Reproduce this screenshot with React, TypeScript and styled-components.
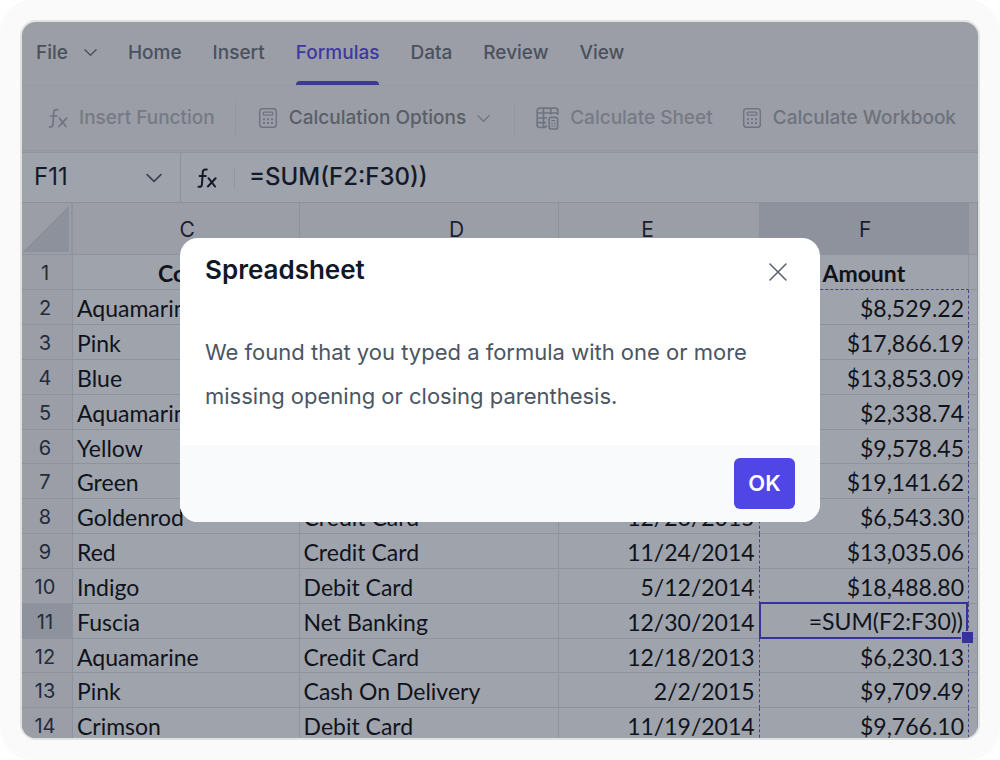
import React from "react";
import styled, { createGlobalStyle } from "styled-components";

const ui = '"Inter", "Liberation Sans", sans-serif';
const cellFont = '"Lato", "Open Sans", sans-serif';

const Global = createGlobalStyle`
  *, *::before, *::after { box-sizing: border-box; }
  body { margin: 0; background: #fff; font-family: ${ui}; }
  button, input { font: inherit; color: inherit; }
`;

const Frame = styled.main`
  height: 100vh;
  padding: 20px;
  background: #fafafa;
  border-radius: 32px;
`;

const Window = styled.div`
  position: relative;
  height: 100%;
  display: flex;
  flex-direction: column;
  overflow: hidden;
  border: 2px solid #e0e2e1;
  border-radius: 16px;
  background: #9b9ea6;
`;

const Tabs = styled.nav`
  flex: none;
  height: 64px;
  display: flex;
  align-items: stretch;
  gap: 31px;
  padding: 0 14px;
  border-bottom: 1px solid #969aa3;
`;

const Tab = styled.button<{ $active?: boolean }>`
  position: relative;
  display: flex;
  align-items: center;
  gap: 16px;
  padding: 0 0 2px;
  border: 0;
  background: none;
  color: ${p => (p.$active ? "#3e38a0" : "#4a515e")};
  font-size: 19px;
  font-weight: 500;
  line-height: 24px;

  &::after {
    content: "";
    display: ${p => (p.$active ? "block" : "none")};
    position: absolute;
    inset: auto 0 0;
    height: 4px;
    border-radius: 4px 4px 0 0;
    background: #3d3899;
  }
`;

const Toolbar = styled.div`
  flex: none;
  height: 67px;
  display: flex;
  align-items: center;
  padding: 0 22px 0 26px;
  border-bottom: 3px double #9195a0;
`;

const Tool = styled.button<{ $tone: string }>`
  display: flex;
  align-items: center;
  gap: 11px;
  padding: 0;
  border: 0;
  background: none;
  color: ${p => p.$tone};
  font-size: 19px;
  font-weight: 500;
  line-height: 24px;
  white-space: nowrap;

  svg { color: #6f7480; }
`;

const Divider = styled.span<{ $l: number; $r: number; $tall?: boolean }>`
  flex: none;
  width: 1px;
  height: ${p => (p.$tall ? 32 : 20)}px;
  margin: 0 ${p => p.$r}px 0 ${p => p.$l}px;
  background: #92969f;
`;

const Spacer = styled.span`
  flex: 1;
`;

const FormulaBar = styled.div`
  flex: none;
  height: 50px;
  display: flex;
  align-items: center;
  background: #9fa3ac;
  border-bottom: 1px solid #8c919b;
  color: #141a29;
`;

const NameBox = styled.div`
  align-self: stretch;
  width: 159px;
  display: flex;
  align-items: center;
  justify-content: space-between;
  padding: 0 18px 0 12px;
  border-right: 1px solid #8c919b;
  margin-right: 16px;

  svg { color: #3c4352; }
`;

const BarInput = styled.input`
  min-width: 0;
  flex: 1;
  padding: 0 0 2px;
  border: 0;
  outline: 0;
  background: none;
  font-size: 24px;
  font-weight: 500;
  line-height: 32px;
`;

const NameInput = styled(BarInput)`
  font-weight: 400;
`;

const Sheet = styled.table`
  flex: none;
  width: 100%;
  table-layout: fixed;
  border-collapse: separate;
  border-spacing: 0;
  background: #9fa3ac;
`;

const ColHead = styled.th<{ $active?: boolean; $l?: number; $r?: number }>`
  height: 52px;
  padding: 2px ${p => p.$r ?? 0}px 0 ${p => p.$l ?? 2}px;
  background: ${p => (p.$active ? "#8d929c" : "#9b9ea6")};
  border-right: 1px solid #8c929c;
  border-bottom: 1px solid #8e939d;
  color: #1a2030;
  font-size: 21px;
  font-weight: 400;
  line-height: 26px;
`;

const Corner = styled(ColHead)`
  background: linear-gradient(135deg, #9b9ea6 50%, #8c919c 50%) 0 3px / 47px 46px no-repeat #9b9ea6;
  border-right: 2px solid #90949e;
`;

const Row = styled.tr<{ $short: boolean }>`
  height: ${p => (p.$short ? 34 : 35)}px;
`;

const RowHead = styled.th<{ $active?: boolean }>`
  padding: 2px 4px 0 0;
  background: ${p => (p.$active ? "#8d929c" : "#9b9ea6")};
  border-right: 1px solid #8e939d;
  border-bottom: 1px solid #8e939d;
  color: #242b3a;
  font-size: 20px;
  font-weight: 400;
  line-height: 24px;
`;

const Cell = styled.td<{ $align?: "left" | "right" | "center"; $head?: boolean; $ranged?: boolean; $rangeTop?: boolean }>`
  position: relative;
  padding: 2px 4px 0;
  border-right: 1px ${p => (p.$ranged ? "dashed #4f3f92" : "solid #8e939d")};
  border-bottom: 1px ${p => (p.$rangeTop ? "dashed #4f3f92" : "solid #8e939d")};
  color: #10131b;
  font-family: ${cellFont};
  font-size: 23px;
  font-weight: ${p => (p.$head ? 700 : 400)};
  line-height: 28px;
  text-align: ${p => p.$align ?? "left"};
  white-space: nowrap;
`;

const ActiveCell = styled.div`
  position: absolute;
  z-index: 1;
  inset: -2px 0 -1px -1px;
  display: flex;
  align-items: center;
  justify-content: flex-end;
  padding-right: 3px;
  border: 2px solid #37319a;
  background: #9fa3ac;

  &::after {
    content: "";
    position: absolute;
    right: -7px;
    bottom: -6px;
    width: 12px;
    height: 12px;
    background: #37319a;
    border: solid #9fa3ac;
    border-width: 1px 0 0 1px;
  }
`;

const Dialog = styled.section`
  position: absolute;
  z-index: 2;
  top: 216px;
  left: 50%;
  width: 640px;
  max-width: 90%;
  transform: translateX(-50%);
  border-radius: 18px;
  overflow: hidden;
  background: #fff;
`;

const DialogHead = styled.header`
  display: flex;
  align-items: center;
  justify-content: space-between;
  padding: 16px 32px 16px 25px;
`;

const Title = styled.h2`
  margin: 0;
  color: #111827;
  font-size: 26px;
  font-weight: 600;
  line-height: 32px;
`;

const Close = styled.button`
  display: flex;
  padding: 4px 0 0;
  border: 0;
  background: none;
  color: #5b6472;
`;

const Message = styled.p`
  margin: 0;
  padding: 28px 25px 27px;
  color: #4b5563;
  font-size: 22px;
  line-height: 44px;
`;

const DialogFoot = styled.footer`
  display: flex;
  justify-content: flex-end;
  padding: 13px 25px;
  background: #f9fafb;
`;

const OkButton = styled.button`
  width: 61px;
  height: 51px;
  padding: 0 0 2px;
  border: 0;
  border-radius: 6px;
  background: #4f46e5;
  color: #fff;
  font-size: 22px;
  font-weight: 600;
`;

const Chevron = ({ size, stroke = 1.5 }: { size: number; stroke?: number }) => (
  <svg width={size} height={size} viewBox="0 0 14 14" fill="none" stroke="currentColor" strokeWidth={stroke} strokeLinecap="round" strokeLinejoin="round">
    <path d="M1 4l6 6 6-6" />
  </svg>
);

const FxIcon = ({ stroke = 1.7 }: { stroke?: number }) => (
  <svg width="20" height="20" viewBox="0 0 20 20" fill="none" stroke="currentColor" strokeWidth={stroke} strokeLinecap="round" strokeLinejoin="round">
    <path d="M1.500 18.800h1.200c1.300 0 2.100-.8 2.200-2.200l.9-12.400c.1-1.700 1-2.600 2.500-2.600h1.500M2.600 8h6.200" />
    <path d="M11.500 10.200l6.500 8.300M18.600 10.200l-7.700 8.300" />
  </svg>
);

const CalculatorIcon = () => (
  <svg width="20" height="20" viewBox="0 0 20 20" fill="none" stroke="currentColor" strokeWidth="1.5">
    <rect x="1.700" y=".8" width="16.600" height="18.400" rx="2.800" />
    <rect x="5.200" y="4.200" width="9.600" height="3" rx="1" strokeWidth="1.300" />
    <path d="M5 11.300h2M9 11.300h2M13 11.300h2M5 15h2M9 15h2M13 15h2" strokeWidth="2" />
  </svg>
);

const SheetCalcIcon = () => (
  <svg width="23" height="23" viewBox="0 0 23 23" fill="none" stroke="currentColor" strokeWidth="1.7">
    <path d="M8 20.500H3.600a2.400 2.400 0 0 1-2.400-2.400V3.500a2.400 2.400 0 0 1 2.400-2.400h15.800a2.400 2.400 0 0 1 2.400 2.400V8M1.200 6h20.600M1.200 11h9.800M1.200 15.700h8.800M7.500 1.200V20.500M14.700 1.200V7.500M8 20.500c1.500 0 2.300-1 2.300-2.300" />
    <rect x="13.200" y="10.300" width="8.400" height="11.700" rx="1.800" />
    <path d="M15.400 13.600h4M15.400 16.500h1.400M18 16.500h1.400M15.400 19h1.400M18 19h1.400" strokeWidth="1.300" />
  </svg>
);

const CloseIcon = () => (
  <svg width="20" height="20" viewBox="0 0 20 20" fill="none" stroke="currentColor" strokeWidth="1.600" strokeLinecap="round">
    <path d="M2 2l16 16M18 2L2 18" />
  </svg>
);

const rows: [string, string, string, string][] = [
  ["Color", "", "", "Amount"],
  ["Aquamarine", "", "", "$8,529.22"],
  ["Pink", "", "", "$17,866.19"],
  ["Blue", "", "", "$13,853.09"],
  ["Aquamarine", "", "", "$2,338.74"],
  ["Yellow", "", "", "$9,578.45"],
  ["Green", "", "", "$19,141.62"],
  ["Goldenrod", "Credit Card", "12/26/2015", "$6,543.30"],
  ["Red", "Credit Card", "11/24/2014", "$13,035.06"],
  ["Indigo", "Debit Card", "5/12/2014", "$18,488.80"],
  ["Fuscia", "Net Banking", "12/30/2014", "=SUM(F2:F30))"],
  ["Aquamarine", "Credit Card", "12/18/2013", "$6,230.13"],
  ["Pink", "Cash On Delivery", "2/2/2015", "$9,709.49"],
  ["Crimson", "Debit Card", "11/19/2014", "$9,766.10"],
];

export default function App() {
  return (
    <>
      <Global />
      <Frame>
        <Window>
          <Tabs aria-label="Ribbon">
            <Tab>File <Chevron size={13} /></Tab>
            {["Home", "Insert", "Formulas", "Data", "Review", "View"].map(t => (
              <Tab key={t} $active={t === "Formulas"}>{t}</Tab>
            ))}
          </Tabs>
          <Toolbar>
            <Tool $tone="#757a85"><FxIcon />Insert Function</Tool>
            <Divider $tall $l={20} $r={22} />
            <Tool $tone="#595e69"><CalculatorIcon />Calculation Options <Chevron size={13} stroke={1.3} /></Tool>
            <Divider $tall $l={24} $r={21} />
            <Tool $tone="#757a85"><SheetCalcIcon />Calculate Sheet</Tool>
            <Spacer />
            <Tool $tone="#6d727d"><CalculatorIcon />Calculate Workbook</Tool>
          </Toolbar>
          <FormulaBar>
            <NameBox>
              <NameInput aria-label="Name box" defaultValue="F11" />
              <Chevron size={16} />
            </NameBox>
            <FxIcon stroke={2} />
            <Divider $l={17} $r={14} />
            <BarInput aria-label="Formula" defaultValue="=SUM(F2:F30))" />
          </FormulaBar>
          <Sheet>
            <colgroup>
              <col style={{ width: "51px" }} />
              <col style={{ width: "23.700%" }} />
              <col style={{ width: "27.100%" }} />
              <col />
              <col style={{ width: "21.900%" }} />
              <col style={{ width: "9px" }} />
            </colgroup>
            <thead>
              <tr>
                <Corner aria-label="Select all" />
                <ColHead $l={3}>C</ColHead>
                <ColHead $l={56}>D</ColHead>
                <ColHead $l={0} $r={22}>E</ColHead>
                <ColHead $active $l={3}>F</ColHead>
                <ColHead />
              </tr>
            </thead>
            <tbody>
              {rows.map(([color, mode, date, amount], i) => {
                const head = i === 0;
                const active = i === 10;
                return (
                  <Row key={i} $short={i % 6 === 5}>
                    <RowHead $active={active}>{i + 1}</RowHead>
                    <Cell $head={head} $align={head ? "center" : "left"}>{color}</Cell>
                    <Cell $head={head} $align={head ? "center" : "left"}>{mode}</Cell>
                    <Cell $head={head} $align={head ? "center" : "right"} $ranged={!head}>{date}</Cell>
                    <Cell $head={head} $align={head ? "center" : "right"} $ranged={!head} $rangeTop={head}>
                      {active ? <ActiveCell>{amount}</ActiveCell> : amount}
                    </Cell>
                    <Cell />
                  </Row>
                );
              })}
            </tbody>
          </Sheet>
          <Dialog role="alertdialog" aria-labelledby="dialog-title" aria-describedby="dialog-message">
            <DialogHead>
              <Title id="dialog-title">Spreadsheet</Title>
              <Close aria-label="Close"><CloseIcon /></Close>
            </DialogHead>
            <Message id="dialog-message">
              We found that you typed a formula with one or more missing opening or closing parenthesis.
            </Message>
            <DialogFoot>
              <OkButton>OK</OkButton>
            </DialogFoot>
          </Dialog>
        </Window>
      </Frame>
    </>
  );
}
